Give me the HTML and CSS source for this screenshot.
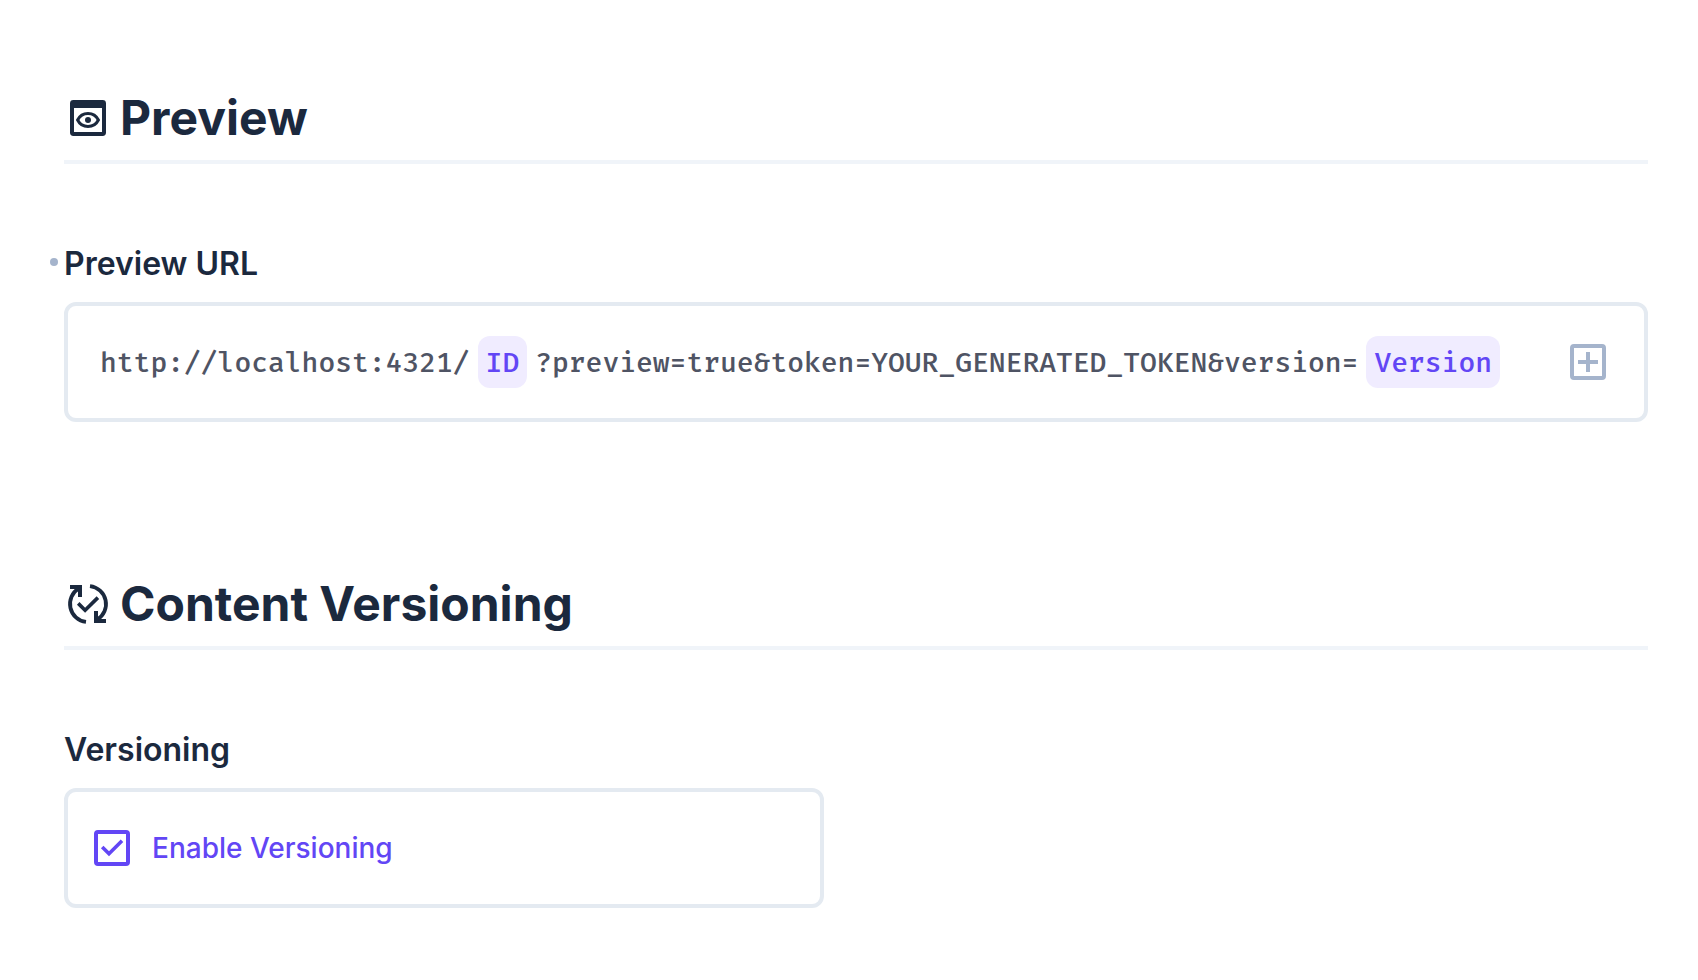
FILE: index.html
```html
<!DOCTYPE html>
<html lang="en">
<head>
<meta charset="utf-8">
<meta name="viewport" content="width=device-width, initial-scale=1">
<title>Collection settings</title>
<link rel="stylesheet" href="styles.css">
</head>
<body>
<main class="settings">
  <section class="group">
    <h2 class="group-title">
      <svg class="icon" viewBox="0 0 24 24" aria-hidden="true">
        <path fill="currentColor" fill-rule="evenodd" d="M4.7 3h14.6A1.7 1.7 0 0 1 21 4.700v14.600a1.700 1.700 0 0 1-1.700 1.700H4.700A1.700 1.700 0 0 1 3 19.300V4.700A1.700 1.700 0 0 1 4.700 3zM5 7v12h14V7z"/>
        <path fill="none" stroke="currentColor" stroke-width="1.500" d="M6.800 13c1-2 3-3.250 5.200-3.250s4.200 1.250 5.200 3.250c-1 2-3 3.250-5.200 3.250s-4.200-1.250-5.200-3.250z"/>
        <circle fill="currentColor" cx="12" cy="13" r="1.500"/>
      </svg>
      Preview
    </h2>
    <div class="field">
      <div class="label edited" id="url-label">Preview URL</div>
      <div class="box url-box">
        <div class="template" role="textbox" aria-labelledby="url-label">
          <span class="text">http://localhost:4321/</span>
          <button class="text chip" type="button">ID</button>
          <span class="text">?preview=true&amp;token=YOUR_GENERATED_TOKEN&amp;version=</span>
          <button class="text chip" type="button">Version</button>
        </div>
        <button class="add" type="button" aria-label="Add field">
          <svg class="icon" viewBox="0 0 24 24" aria-hidden="true">
            <rect x="4" y="4" width="16" height="16" rx="1" fill="none" stroke="currentColor" stroke-width="2"/>
            <path d="M12 7v10M7 12h10" fill="none" stroke="currentColor" stroke-width="2"/>
          </svg>
        </button>
      </div>
    </div>
  </section>

  <section class="group">
    <h2 class="group-title">
      <svg class="icon" viewBox="0 0 24 24" aria-hidden="true">
        <g fill="none" stroke="currentColor">
          <path stroke-width="2" d="M3 3.500h5v5M21 20.500h-5v-5"/>
          <path stroke-width="1.900" d="M7.400 4.200A9.050 9.050 0 0 0 11 20.950M16.600 19.800A9.050 9.050 0 0 0 13 3.050"/>
          <path stroke-width="1.800" d="M7.100 11.700l3.450 3.400 6.400-6.300"/>
        </g>
      </svg>
      Content Versioning
    </h2>
    <div class="field half">
      <div class="label">Versioning</div>
      <label class="box toggle">
        <span class="check">
          <input type="checkbox" checked>
          <svg class="icon" viewBox="0 0 24 24" aria-hidden="true">
            <path d="M7.100 11.500l3.400 3.400 6.500-6.500" fill="none" stroke="currentColor" stroke-width="1.800"/>
          </svg>
        </span>
        Enable Versioning
      </label>
    </div>
  </section>
</main>
</body>
</html>
```
FILE: styles.css
```css
* {
  box-sizing: border-box;
}

body {
  margin: 0;
  background: #fff;
  color: #1b293e;
  font-family: Inter, "Liberation Sans", sans-serif;
}

button,
input {
  color: inherit;
  font: inherit;
}

button {
  border: 0;
  background: none;
  cursor: pointer;
}

.settings {
  display: flex;
  flex-direction: column;
  gap: 154px;
  padding: 90px 50px 72px 64px;
}

.group {
  display: flex;
  flex-direction: column;
  gap: 80px;
}

.icon {
  display: block;
  flex: none;
  width: 48px;
  height: 48px;
}

.group-title {
  display: flex;
  align-items: center;
  gap: 8px;
  margin: 0;
  padding-bottom: 14px;
  border-bottom: 4px solid #f0f4f9;
  font-size: 48px;
  font-weight: 700;
  line-height: 56px;
}

.field {
  display: flex;
  flex-direction: column;
  gap: 18px;
}

.half {
  width: 48%;
}

.label {
  position: relative;
  font-size: 32px;
  font-weight: 600;
  line-height: 40px;
}

.edited::before {
  content: "";
  position: absolute;
  top: 14px;
  left: -14px;
  width: 8px;
  height: 8px;
  border-radius: 50%;
  background: #a5b4cc;
}

.box {
  display: flex;
  align-items: center;
  min-height: 120px;
  border: 4px solid #e4eaf1;
  border-radius: 12px;
  font-size: 28px;
}

.url-box {
  justify-content: space-between;
  padding: 0 32px;
}

.template {
  display: flex;
  align-items: center;
  gap: 8px;
  color: #4f5464;
  font-family: "Fira Mono", "DejaVu Sans Mono", monospace;
  font-weight: 500;
}

.text {
  padding: 3px 0 1px;
  line-height: 48px;
}

.chip {
  padding-inline: 8px;
  border-radius: 12px;
  background: #f0ecff;
  color: #6246f5;
}

.add {
  padding: 0;
  color: #a5b4cc;
}

.toggle {
  gap: 16px;
  padding: 0 20px;
  color: #6246f5;
  font-weight: 500;
  cursor: pointer;
}

.check {
  display: grid;
  place-items: center;
}

.check > * {
  grid-area: 1 / 1;
}

.check input {
  appearance: none;
  width: 36px;
  height: 36px;
  margin: 0;
  border: 4px solid currentColor;
  border-radius: 4px;
}

.check .icon {
  visibility: hidden;
  pointer-events: none;
}

.check input:checked + .icon {
  visibility: visible;
}
```
